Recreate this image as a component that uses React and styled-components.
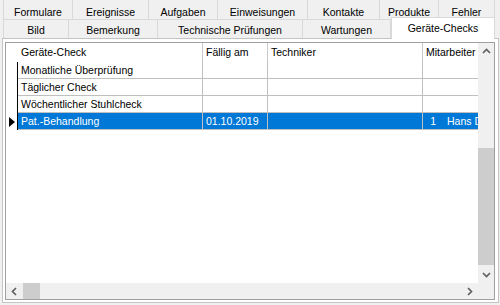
import React from "react";
import styled, { createGlobalStyle } from "styled-components";

const GlobalStyle = createGlobalStyle`
  html, body {
    margin: 0;
    padding: 0;
    background: #f0f0f0;
  }
  * {
    box-sizing: border-box;
  }
`;

const topTabs = [
  { label: "Formulare", width: 70 },
  { label: "Ereignisse", width: 76 },
  { label: "Aufgaben", width: 69 },
  { label: "Einweisungen", width: 90 },
  { label: "Kontakte", width: 72 },
  { label: "Produkte", width: 59 },
  { label: "Fehler", width: 56 },
];

const bottomTabs = [
  { label: "Bild", width: 66 },
  { label: "Bemerkung", width: 89 },
  { label: "Technische Prüfungen", width: 145 },
  { label: "Wartungen", width: 88 },
  { label: "Geräte-Checks", width: 104, active: true },
];

const columns = [
  { key: "check", title: "Geräte-Check", width: 185 },
  { key: "due", title: "Fällig am", width: 65 },
  { key: "tech", title: "Techniker", width: 155 },
  { key: "staff", title: "Mitarbeiter", width: 120 },
];

const rows = [
  { check: "Monatliche Überprüfung" },
  { check: "Täglicher Check" },
  { check: "Wöchentlicher Stuhlcheck" },
  {
    check: "Pat.-Behandlung",
    due: "01.10.2019",
    staffNo: "1",
    staffName: "Hans Dampf",
    selected: true,
  },
];

const Chevron = ({ dir }) => {
  const rot = { up: 0, right: 90, down: 180, left: 270 }[dir];
  return (
    <svg width="9" height="9" viewBox="0 0 9 9" style={{ transform: `rotate(${rot}deg)` }}>
      <polyline
        points="1,6 4.5,2.5 8,6"
        fill="none"
        stroke="#606060"
        strokeWidth="1.7"
      />
    </svg>
  );
};

const App = () => {
  return (
    <Window>
      <GlobalStyle />
      <TabStrip>
        <TabRow>
          {topTabs.map((t, i) => (
            <Tab key={t.label} $width={t.width} $first={i === 0} $top>
              {t.label}
            </Tab>
          ))}
        </TabRow>
        <TabRow>
          {bottomTabs.map((t, i) =>
            t.active ? (
              <ActiveTab key={t.label} $width={t.width}>
                {t.label}
              </ActiveTab>
            ) : (
              <Tab key={t.label} $width={t.width} $first={i === 0}>
                {t.label}
              </Tab>
            )
          )}
        </TabRow>
      </TabStrip>
      <Panel>
        <GridFrame>
          <Viewport>
            <HeaderRow>
              <RowHead />
              {columns.map((c) => (
                <HeaderCell key={c.key} $width={c.width}>
                  {c.title}
                </HeaderCell>
              ))}
            </HeaderRow>
            {rows.map((r) => (
              <DataRow key={r.check}>
                <RowHead $marked>{r.selected && <Pointer />}</RowHead>
                <Cell $width={185} $selected={r.selected}>
                  {r.check}
                </Cell>
                <Cell $width={65} $selected={r.selected}>
                  {r.due}
                </Cell>
                <Cell $width={155} $selected={r.selected} />
                <Cell $width={120} $selected={r.selected}>
                  {r.staffNo && (
                    <>
                      <StaffNo>{r.staffNo}</StaffNo>
                      <StaffName>{r.staffName}</StaffName>
                    </>
                  )}
                </Cell>
              </DataRow>
            ))}
          </Viewport>
          <VScroll>
            <Arrow>
              <Chevron dir="up" />
            </Arrow>
            <Track>
              <VThumb $offset={88} $size={117} />
            </Track>
            <Arrow>
              <Chevron dir="down" />
            </Arrow>
          </VScroll>
          <HScroll>
            <HArrow>
              <Chevron dir="left" />
            </HArrow>
            <HTrack>
              <HThumb $offset={0} $size={17} />
            </HTrack>
            <HArrow>
              <Chevron dir="right" />
            </HArrow>
          </HScroll>
          <Corner />
        </GridFrame>
      </Panel>
    </Window>
  );
};

const Window = styled.div`
  width: 500px;
  height: 305px;
  padding: 0 1px 2px 2px;
  background: #f0f0f0;
  display: flex;
  flex-direction: column;
  font-family: "Liberation Sans", Arial, sans-serif;
  font-size: 10.5px;
  color: #000;
  overflow: hidden;
`;

const TabStrip = styled.div`
  margin-left: 1px;
  display: flex;
  flex-direction: column;
`;

const TabRow = styled.div`
  display: flex;
`;

const Tab = styled.div`
  width: ${(p) => p.$width}px;
  height: ${(p) => (p.$top ? 20 : 18)}px;
  padding-top: ${(p) => (p.$top ? 6 : 4)}px;
  line-height: 12px;
  text-align: center;
  white-space: nowrap;
  background: #f0f0f0;
  border-right: 1px solid #d9d9d9;
  border-left: ${(p) => (p.$first ? "1px solid #d9d9d9" : "none")};
  border-bottom: ${(p) => (p.$top ? "1px solid #d9d9d9" : "none")};
`;

const ActiveTab = styled.div`
  position: relative;
  z-index: 1;
  width: ${(p) => p.$width}px;
  height: 22px;
  margin-top: -3px;
  margin-bottom: -1px;
  padding-top: 4px;
  line-height: 12px;
  text-align: center;
  white-space: nowrap;
  background: #fff;
  border: 1px solid #d9d9d9;
  border-bottom: none;
`;

const Panel = styled.div`
  flex: 1;
  display: flex;
  padding: 3px 3px 2px 2px;
  background: #fff;
  border: 1px solid #c4c4c4;
`;

const GridFrame = styled.div`
  flex: 1;
  display: grid;
  grid-template-columns: 1fr 16px;
  grid-template-rows: 1fr 16px;
  border: 1px solid #a0a0a0;
  background: #fff;
`;

const Viewport = styled.div`
  overflow: hidden;
  background: #fff;
`;

const HeaderRow = styled.div`
  display: flex;
  height: 19px;
  width: max-content;
`;

const DataRow = styled.div`
  display: flex;
  height: 17px;
  width: max-content;
`;

const RowHead = styled.div`
  width: 12px;
  flex-shrink: 0;
  display: flex;
  align-items: center;
  justify-content: flex-end;
  padding-right: 2px;
  border-right: 1px solid ${(p) => (p.$marked ? "#000" : "transparent")};
`;

const Pointer = styled.div`
  width: 0;
  height: 0;
  border-left: 6px solid #000;
  border-top: 5px solid transparent;
  border-bottom: 5px solid transparent;
`;

const HeaderCell = styled.div`
  width: ${(p) => p.$width}px;
  flex-shrink: 0;
  padding-left: 3px;
  line-height: 19px;
  white-space: nowrap;
  border-right: 1px solid #c8c8c8;
`;

const Cell = styled.div`
  width: ${(p) => p.$width}px;
  flex-shrink: 0;
  display: flex;
  padding-left: 3px;
  line-height: 16px;
  white-space: nowrap;
  overflow: hidden;
  background: ${(p) => (p.$selected ? "#0078d7" : "#fff")};
  color: ${(p) => (p.$selected ? "#fff" : "#000")};
  border-right: 1px solid #bfbfbf;
  border-bottom: 1px solid #bfbfbf;
`;

const StaffNo = styled.span`
  width: 10px;
  text-align: right;
`;

const StaffName = styled.span`
  margin-left: 11px;
`;

const VScroll = styled.div`
  display: flex;
  flex-direction: column;
  background: #f0f0f0;
`;

const Arrow = styled.div`
  height: 17px;
  display: flex;
  align-items: center;
  justify-content: center;
`;

const Track = styled.div`
  flex: 1;
  display: flex;
  flex-direction: column;
`;

const VThumb = styled.div`
  margin-top: ${(p) => p.$offset}px;
  height: ${(p) => p.$size}px;
  background: #cdcdcd;
`;

const HScroll = styled.div`
  display: flex;
  background: #f0f0f0;
`;

const HArrow = styled.div`
  width: 17px;
  display: flex;
  align-items: center;
  justify-content: center;
`;

const HTrack = styled.div`
  flex: 1;
  display: flex;
`;

const HThumb = styled.div`
  margin-left: ${(p) => p.$offset}px;
  width: ${(p) => p.$size}px;
  background: #cdcdcd;
`;

const Corner = styled.div`
  background: #f0f0f0;
`;

export default App;
